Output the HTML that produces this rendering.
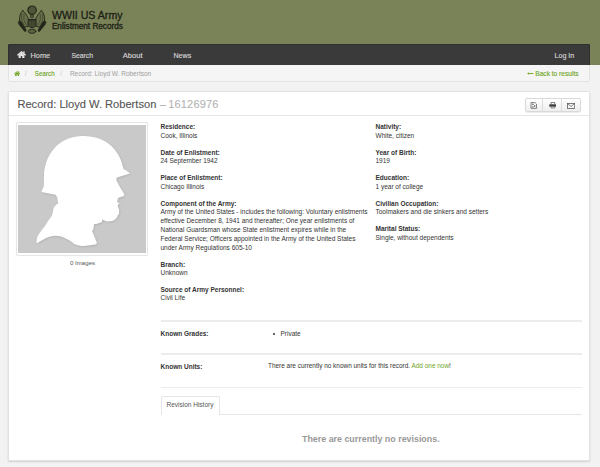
<!DOCTYPE html>
<html><head><meta charset="utf-8">
<style>
*{box-sizing:border-box;margin:0;padding:0}
html,body{width:600px;height:467px;overflow:hidden;background:#f2f2f2;font-family:"Liberation Sans",sans-serif;position:relative}
.a{position:absolute;white-space:nowrap;line-height:1}
#hdr{position:absolute;left:0;top:0;width:600px;height:65px;background:#7a8358}
#nav{position:absolute;left:8px;top:44px;width:582px;height:21px;background:#3a3a3a;box-shadow:inset 1px 1px 0 #2f2f2f,inset -1px 0 0 #2f2f2f;border-radius:2px 2px 0 0}
#nav .a{color:#d4d4d4;font-size:7.3px;-webkit-text-stroke:.15px #d4d4d4}
#bc{position:absolute;left:8px;top:65px;width:582px;height:17px;background:#f5f5f5;border:1px solid #e3e3e3;border-top:none;border-radius:0 0 2px 2px}
#bc .a{font-size:6.5px}
.g{color:#6ea524}
#panel{position:absolute;left:8px;top:91px;width:582px;height:370px;background:#fff;border:1px solid #e2e2e2;border-radius:1.5px;box-shadow:0 1px 2px rgba(0,0,0,.14)}
#ph{position:absolute;left:0;top:0;width:580px;height:24px;border-bottom:1px solid #e6e6e6}
.t{color:#333}
.hr{position:absolute;left:160.5px;width:421.5px;height:1.5px;background:#ececec}
.lbl{font-weight:700;font-size:6.5px;color:#333}
</style></head><body>
<div id="hdr">
  <svg style="position:absolute;left:16px;top:4px" width="32" height="32" viewBox="0 0 32 32">
    <g fill="none" stroke="#23271a" stroke-linecap="round">
      <circle cx="16.1" cy="6.2" r="4.2" stroke-width="1.2" fill="#23271a" fill-opacity=".5"/>
      <path d="M14.6 10.8 Q16.1 12 17.6 10.8 L17.2 13.8 H15 Z" fill="#23271a" fill-opacity=".45" stroke-width=".6"/>
      <path d="M6.8 6.6 C4.2 9,3.3 13,3.5 16 C3.8 19,5.5 21.5,9 23 L12 22.5 L12.3 14.5 C11 11.5,9 8.8,6.8 6.6 Z" stroke-width=".9" fill="#23271a" fill-opacity=".22"/>
      <path d="M25.4 6.6 C28 9,28.9 13,28.7 16 C28.4 19,26.7 21.5,23.2 23 L20.2 22.5 L19.9 14.5 C21.2 11.5,23.2 8.8,25.4 6.6 Z" stroke-width=".9" fill="#23271a" fill-opacity=".22"/>
      <path d="M5.8 10 C5 14,5.5 18,8.5 21 M8 10.5 C7.3 14,7.8 17.5,10.3 20.5 M26.4 10 C27.2 14,26.7 18,23.7 21 M24.2 10.5 C24.9 14,24.4 17.5,21.9 20.5" stroke-width=".55" opacity=".8"/>
      <path d="M12.4 15.5 H19.8" stroke-width="1"/>
      <path d="M12.6 16.6 H19.6 V22.5 Q16.1 25.3 12.6 22.5 Z" stroke-width=".7" fill="#23271a" fill-opacity=".45"/>
      <path d="M14 17 V23 M15.4 17 V23.8 M16.8 17 V23.8 M18.2 17 V23.2" stroke-width=".55" opacity=".9"/>
      <path d="M2.2 18.5 C2.5 16.6,4.6 16.6,5.8 18.6 L10.2 26 C10.6 27.6,9 28,8.2 27 L3 20.5 Z" fill="#23271a" stroke-width=".5"/>
      <path d="M30 18.5 C29.7 16.6,27.6 16.6,26.4 18.6 L22 26 C21.6 27.6,23.2 28,24 27 L29.2 20.5 Z" fill="#23271a" stroke-width=".5"/>
      <ellipse cx="16.1" cy="27.3" rx="3.8" ry="2.1" stroke-width=".9" fill="#23271a" fill-opacity=".35"/>
    </g>
  </svg>
  <div class="a" style="left:51.9px;top:9.6px;font-size:10.6px;color:#1c1e15;-webkit-text-stroke:.3px #1c1e15">WWII US Army</div>
  <div class="a" style="left:51.9px;top:22.6px;font-size:8.2px;color:#1c1e15;-webkit-text-stroke:.3px #1c1e15">Enlistment Records</div>
</div>
<div id="nav">
  <svg style="position:absolute;left:8.7px;top:6.8px" width="9" height="7.2" viewBox="0 0 9 7.2"><path d="M6.3 .3 H7.6 V3 L6.3 2 Z" fill="#dcdcdc"/><path d="M.4 4.2 L4.5 .9 L8.6 4.2" fill="none" stroke="#e6e6e6" stroke-width="1.3"/><path d="M1.6 4 L4.5 1.8 L7.4 4 V7.2 H5.2 V5 H3.8 V7.2 H1.6 Z" fill="#e2e2e2"/></svg>
  <div class="a" style="left:22.6px;top:7.8px">Home</div>
  <div class="a" style="left:63.5px;top:8.7px;font-size:6.8px">Search</div>
  <div class="a" style="left:114.7px;top:7.6px;font-size:7.6px">About</div>
  <div class="a" style="left:165.5px;top:8.7px;font-size:7.1px">News</div>
  <div class="a" style="left:546.5px;top:8.7px;font-size:7.1px">Log In</div>
</div>
<div id="bc">
  <svg style="position:absolute;left:4.5px;top:5.7px" width="6.2" height="5" viewBox="0 0 9 7.2"><path d="M6.3 .3 H7.6 V3 L6.3 2 Z" fill="#74a626"/><path d="M.4 4.2 L4.5 .9 L8.6 4.2" fill="none" stroke="#74a626" stroke-width="1.4"/><path d="M1.6 4 L4.5 1.8 L7.4 4 V7.2 H5.2 V5 H3.8 V7.2 H1.6 Z" fill="#74a626"/></svg>
  <div class="a" style="left:15.8px;top:5.5px;color:#c4c4c4">/</div>
  <div class="a g" style="left:25.8px;top:5.5px;font-size:6.3px;-webkit-text-stroke:.12px #6ea524">Search</div>
  <div class="a" style="left:51.3px;top:5.5px;color:#c4c4c4">/</div>
  <div class="a" style="left:60.9px;top:5.5px;color:#a0a0a0">Record: Lloyd W. Robertson</div>
  <svg style="position:absolute;left:518.3px;top:7.2px" width="6.5" height="3" viewBox="0 0 6.5 3"><path d="M0 1.5 L2 .2 V1.05 H6.3 V1.95 H2 V2.8 Z" fill="#7aab30"/></svg><div class="a g" style="left:526.3px;top:5.5px;font-size:6.6px;-webkit-text-stroke:.12px #6ea524">Back to results</div>
</div>
<div id="panel">
  <div id="ph">
    <div class="a" style="left:8.4px;top:6.8px;font-size:11.12px;color:#555;-webkit-text-stroke:.12px #555">Record: Lloyd W. Robertson</div><div class="a" style="left:151px;top:6.8px;font-size:11px;color:#b3b3b3;-webkit-text-stroke:.1px #b3b3b3">–</div><div class="a" style="left:159.2px;top:6.8px;font-size:11px;letter-spacing:.18px;color:#b3b3b3;-webkit-text-stroke:.1px #b3b3b3">16126976</div>
    <div style="position:absolute;left:515.5px;top:5.8px;width:56.3px;height:14.5px;border:1px solid #d9d9d9;border-radius:2px;background:linear-gradient(#fff,#eee);box-shadow:0 1px 1px rgba(0,0,0,.08)">
      <div style="position:absolute;left:16.6px;top:0;width:1px;height:100%;background:#dcdcdc"></div>
      <div style="position:absolute;left:35.6px;top:0;width:1px;height:100%;background:#dcdcdc"></div>
      <svg style="position:absolute;left:4.3px;top:3.2px" width="7.5" height="6.8" viewBox="0 0 7.5 6.8"><path d="M1 .45 H4.9 L6.5 2 V6.35 H1 Z" fill="none" stroke="#5a5a5a" stroke-width=".75"/><path d="M2.2 1.6 H3.6 V3 H2.2 Z M3.9 3.3 H5.3 V4.7 H3.9 Z M2.2 4.3 H3.4 V5.5 H2.2 Z" fill="#6a6a6a"/></svg>
      <svg style="position:absolute;left:23.2px;top:3.6px" width="7.8" height="6.4" viewBox="0 0 7.8 6.4"><path d="M2.1 2.1 V.45 H5.7 V2.1" fill="none" stroke="#555" stroke-width=".75"/><path d="M.3 2.3 H7.5 V4.7 H.3 Z" fill="#3a3a3a"/><path d="M2.1 4.7 V5.95 H5.7 V4.7" fill="none" stroke="#555" stroke-width=".7"/></svg>
      <svg style="position:absolute;left:41.5px;top:4px" width="8.2" height="6" viewBox="0 0 8.2 6"><rect x=".45" y=".45" width="7.3" height="5.1" fill="none" stroke="#555" stroke-width=".75"/><path d="M.8 .9 L4.1 3.4 L7.4 .9" fill="none" stroke="#555" stroke-width=".7"/></svg>
    </div>
  </div>
</div>
<!-- thumbnail -->
<div style="position:absolute;left:16px;top:122px;width:132px;height:133.5px;border:1px solid #e6e6e6;border-radius:2px;background:#fff;box-shadow:0 0 1px rgba(0,0,0,.1)">
  <div style="position:absolute;left:1.2px;top:2px;width:127.8px;height:128px;background:#c9c9c9;overflow:hidden">
    <svg width="128" height="128" viewBox="0 0 128 128" style="display:block">
      <defs><filter id="bl" x="-10%" y="-10%" width="120%" height="120%"><feGaussianBlur stdDeviation="0.45"/></filter>
      <filter id="sh" x="-10%" y="-10%" width="120%" height="120%"><feGaussianBlur stdDeviation="1.3"/></filter></defs>
      <path filter="url(#sh)" fill="#000" fill-opacity=".13" transform="translate(.6 .8)" d="M19.2 118.2 C24 115,31 111,37.4 110.8 C44 110.8,50 114,56.3 118.9 C60 120.5,63 120.9,65.7 120.9 L77.5 119.6 C78.5 119,79 118,78.9 117.7 L74.2 106.2 C75 104.5,75.6 103.5,75.6 103 L76.1 98.8 L77 99.3 C79.5 98.5,82 97.8,83.9 97 L84.4 94.2 C86.5 95.5,88 96.3,89.5 96.5 C93 96.3,95.5 95.7,96.8 94.7 C98.5 93.5,99.6 92,99.6 90.5 L101.1 88.8 L101.1 85 C101.1 84,100.5 83,99.8 81.8 L99.8 79.8 L101.7 78.6 L99.3 77.3 C99.2 76,99.5 74,100.4 72.8 L104.3 71.6 C105.5 71.5,106.5 70.5,106.2 68.9 C103 63,100 59,98.5 55.4 L98.5 53 L99.8 52.2 L112 48.4 C110 46,107 45,105.5 43.9 C102 25,88 10,63 11 C40 12,27 30,26 50 L25.8 61.25 L23.3 67 L37.4 69.7 C38.5 71,39.4 72,39.4 73.1 L40.1 78.5 L38.1 79.8 C36.5 81.5,35.4 83,35.4 83.9 L34 90.6 C31.5 94,29 97.5,26.6 101.4 C24 104.5,21.5 107.5,19.9 110.8 C19 113,18.5 115,18.5 116.9 Z"/>
      <path filter="url(#bl)" fill="#fff" d="M19.2 118.2 C24 115,31 111,37.4 110.8 C44 110.8,50 114,56.3 118.9 C60 120.5,63 120.9,65.7 120.9 L77.5 119.6 C78.5 119,79 118,78.9 117.7 L74.2 106.2 C75 104.5,75.6 103.5,75.6 103 L76.1 98.8 L77 99.3 C79.5 98.5,82 97.8,83.9 97 L84.4 94.2 C86.5 95.5,88 96.3,89.5 96.5 C93 96.3,95.5 95.7,96.8 94.7 C98.5 93.5,99.6 92,99.6 90.5 L101.1 88.8 L101.1 85 C101.1 84,100.5 83,99.8 81.8 L99.8 79.8 L101.7 78.6 L99.3 77.3 C99.2 76,99.5 74,100.4 72.8 L104.3 71.6 C105.5 71.5,106.5 70.5,106.2 68.9 C103 63,100 59,98.5 55.4 L98.5 53 L99.8 52.2 L112 48.4 C110 46,107 45,105.5 43.9 C102 25,88 10,63 11 C40 12,27 30,26 50 L25.8 61.25 L23.3 67 L37.4 69.7 C38.5 71,39.4 72,39.4 73.1 L40.1 78.5 L38.1 79.8 C36.5 81.5,35.4 83,35.4 83.9 L34 90.6 C31.5 94,29 97.5,26.6 101.4 C24 104.5,21.5 107.5,19.9 110.8 C19 113,18.5 115,18.5 116.9 Z"/>
    </svg>
  </div>
</div>
<div class="a" style="left:70px;top:259.5px;font-size:6.1px;color:#555">0 Images</div>

<div class="a t" style="left:160.5px;top:124px;font-size:6.5px;font-weight:700">Residence:</div>
<div class="a t" style="left:160.5px;top:133px;font-size:6.5px">Cook, Illinois</div>
<div class="a t" style="left:160.5px;top:150px;font-size:6.5px;font-weight:700">Date of Enlistment:</div>
<div class="a t" style="left:160.5px;top:158px;font-size:6.5px">24 September 1942</div>
<div class="a t" style="left:160.5px;top:175px;font-size:6.5px;font-weight:700">Place of Enlistment:</div>
<div class="a t" style="left:160.5px;top:184px;font-size:6.5px">Chicago Illinois</div>
<div class="a t" style="left:160.5px;top:201px;font-size:6.5px;font-weight:700">Component of the Army:</div>
<div class="a t" style="left:160.5px;top:209px;font-size:6.5px">Army of the United States - includes the following: Voluntary enlistments</div>
<div class="a t" style="left:160.5px;top:218px;font-size:6.5px">effective December 8, 1941 and thereafter; One year enlistments of</div>
<div class="a t" style="left:160.5px;top:227px;font-size:6.5px">National Guardsman whose State enlistment expires while in the</div>
<div class="a t" style="left:160.5px;top:236px;font-size:6.5px">Federal Service; Officers appointed in the Army of the United States</div>
<div class="a t" style="left:160.5px;top:245px;font-size:6.5px">under Army Regulations 605-10</div>
<div class="a t" style="left:160.5px;top:262px;font-size:6.5px;font-weight:700">Branch:</div>
<div class="a t" style="left:160.5px;top:270px;font-size:6.5px">Unknown</div>
<div class="a t" style="left:160.5px;top:287px;font-size:6.5px;font-weight:700">Source of Army Personnel:</div>
<div class="a t" style="left:160.5px;top:295px;font-size:6.5px">Civil Life</div>
<div class="a t" style="left:375.5px;top:124px;font-size:6.5px;font-weight:700">Nativity:</div>
<div class="a t" style="left:375.5px;top:133px;font-size:6.5px">White, citizen</div>
<div class="a t" style="left:375.5px;top:150px;font-size:6.5px;font-weight:700">Year of Birth:</div>
<div class="a t" style="left:375.5px;top:158px;font-size:6.5px">1919</div>
<div class="a t" style="left:375.5px;top:175px;font-size:6.5px;font-weight:700">Education:</div>
<div class="a t" style="left:375.5px;top:184px;font-size:6.5px">1 year of college</div>
<div class="a t" style="left:375.5px;top:201px;font-size:6.5px;font-weight:700">Civilian Occupation:</div>
<div class="a t" style="left:375.5px;top:209px;font-size:6.5px">Toolmakers and die sinkers and setters</div>
<div class="a t" style="left:375.5px;top:226px;font-size:6.5px;font-weight:700">Marital Status:</div>
<div class="a t" style="left:375.5px;top:235px;font-size:6.5px">Single, without dependents</div>
<div class="hr" style="top:320.3px"></div>
<div class="a lbl" style="left:160.5px;top:331px">Known Grades:</div>
<div style="position:absolute;left:272.8px;top:332.6px;width:2.4px;height:2.4px;border-radius:50%;background:#333"></div>
<div class="a" style="left:280.5px;top:331px;font-size:6.5px;color:#333">Private</div>
<div class="hr" style="top:353px"></div>
<div class="a lbl" style="left:160.5px;top:364px">Known Units:</div>
<div class="a" style="left:268px;top:363px;font-size:6.45px;color:#333">There are currently no known units for this record. <span class="g">Add one now</span>!</div>
<div class="hr" style="top:386.8px"></div>

<div style="position:absolute;left:160.5px;top:414px;width:421.5px;height:1px;background:#e6e6e6"></div>
<div style="position:absolute;left:160.5px;top:395.5px;width:59px;height:19.5px;border:1px solid #e6e6e6;border-bottom:none;border-radius:2px 2px 0 0;background:#fff"></div>
<div class="a" style="left:166.5px;top:402px;font-size:6.5px;color:#555">Revision History</div>
<div class="a" style="left:302px;top:435px;font-size:8.9px;font-weight:700;color:#999">There are currently no revisions.</div>
</body></html>
